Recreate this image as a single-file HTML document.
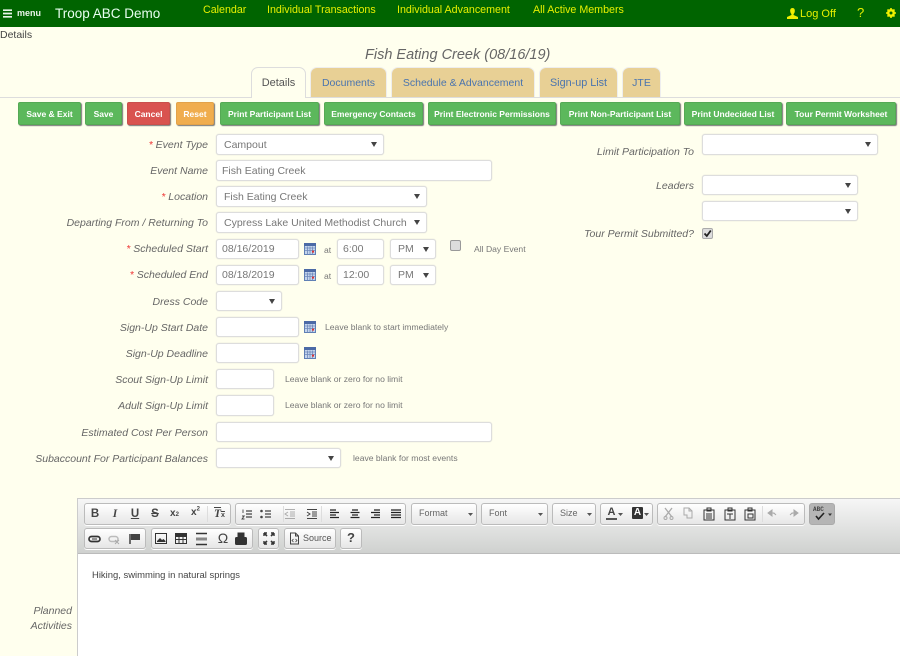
<!DOCTYPE html>
<html><head><meta charset="utf-8"><title>Details</title>
<style>
html,body{margin:0;padding:0}
body{width:900px;height:656px;overflow:hidden;background:#ffffee;position:relative;font-family:"Liberation Sans",sans-serif;color:#555}
#p *{position:absolute;box-sizing:border-box;white-space:nowrap}
svg *{position:static!important}
.nav{color:#e6f000;font-size:10.7px;top:3px;line-height:14px}
.tab{top:67px;height:30px;background:#e8d095;border:1px solid #eee;border-bottom:0;border-radius:7px 7px 0 0;color:#4a74ae;font-size:10.5px;line-height:31px;text-align:center}
.b{top:102px;height:23px;background:#5cb85c;color:#fff;font-weight:bold;font-size:8.5px;line-height:22px;text-align:center;border-radius:2px;box-shadow:1px 1px 1px #777;border:1px solid #55a955}
.l{right:692px;font-style:italic;font-size:10.5px;color:#666;line-height:14px;text-align:right;margin-top:1px}
.r{right:206px}
.l i{color:#e33;margin-right:3px;position:static!important;font-style:italic}
.f{background:#fff;border:1px solid #ddd;border-radius:3px;height:21px;font-size:10.5px;line-height:20px;color:#777;padding-left:5px;box-shadow:0 0 1px #ccc}
.s{padding-left:7px}
.s:after{content:"";position:absolute;right:6px;top:7px;border:3.5px solid transparent;border-top:5px solid #444;border-bottom:0}
.h{font-size:8.6px;color:#777;line-height:11px}
.cal{width:12px;height:12px}
.g{height:22px;background:linear-gradient(#fff,#e6e6e6);border:1px solid #bbb;border-radius:3px;box-shadow:0 1px 0 #fff}
.t{font-family:"Liberation Sans",sans-serif;color:#444;line-height:14px;text-align:center}
.d{font-size:9px;color:#666;line-height:20px;padding-left:8px}
.sep{width:1px;height:16px;background:#ddd;top:506px}
</style></head><body>
<svg width="0" height="0" style="position:absolute"><defs>
<g id="cal"><rect x=".5" y=".5" width="11" height="11" fill="#c4d4ec" stroke="#5f7fb5"/><rect x="0" y="0" width="12" height="3" fill="#4c6aa6"/><path d="M1 5h10M1 7.5h10M3.5 3.5v8M6 3.5v8M8.5 3.5v8" stroke="#6d88ba" stroke-width=".8"/><rect x="8" y="7.6" width="2" height="2" fill="#d33"/></g>
</defs></svg>
<div id="p">
<div style="left:0;top:0;width:900px;height:27px;background:#006400"></div>
<svg style="left:3px;top:9px" width="10" height="9"><path d="M0 1.2h9M0 4.500h9M0 7.800h9" stroke="#e8f4e8" stroke-width="1.700"/></svg>
<div style="left:17px;top:7px;color:#e8f4e8;font-size:9px;font-weight:bold;line-height:12px">menu</div>
<div style="left:55px;top:5px;color:#e8fff0;font-size:13.5px;line-height:17px">Troop ABC Demo</div>
<div class="nav" style="left:203px">Calendar</div>
<div class="nav" style="left:267px">Individual Transactions</div>
<div class="nav" style="left:397px">Individual Advancement</div>
<div class="nav" style="left:533px">All Active Members</div>
<svg style="left:787px;top:8px" width="11" height="11"><path d="M5.500 0C3.600 0 3 1.500 3.200 3.200c.1 1.200.6 2.200 1.200 2.800v1L0 9v2h11V9L6.600 7V6c.6-.6 1.100-1.600 1.200-2.800C8 1.500 7.400 0 5.500 0z" fill="#f0f000"/></svg>
<div class="nav" style="left:800px;top:7px;font-size:11px">Log Off</div>
<div class="nav" style="left:857px;top:6px;font-size:13px">?</div>
<svg style="left:886px;top:8px" width="10" height="10" viewBox="0 0 10 10"><circle cx="5" cy="5" r="2.900" fill="none" stroke="#f0f000" stroke-width="2.200"/><path d="M5 0v10M0 5h10M1.500 1.500l7 7M8.500 1.500l-7 7" stroke="#f0f000" stroke-width="1.600"/><circle cx="5" cy="5" r="1.500" fill="#006400"/></svg>

<div style="left:0;top:29px;font-size:10.5px;color:#444;line-height:13px">Details</div>
<div style="left:365px;top:46px;font-size:14.5px;font-style:italic;color:#666;line-height:19px">Fish Eating Creek (08/16/19)</div>

<div style="left:0;top:97px;width:900px;height:1px;background:#ddd"></div>
<div class="tab" style="left:251px;width:55px;height:31px;background:#ffffee;color:#555;border-color:#ddd;font-size:11px">Details</div>
<div class="tab" style="left:310px;width:77px">Documents</div>
<div class="tab" style="left:391px;width:144px">Schedule &amp; Advancement</div>
<div class="tab" style="left:539px;width:79px;font-size:10.8px">Sign-up List</div>
<div class="tab" style="left:622px;width:39px">JTE</div>

<div class="b" style="left:18px;width:63px">Save &amp; Exit</div>
<div class="b" style="left:85px;width:37px">Save</div>
<div class="b" style="left:127px;width:43px;background:#d9534f;border-color:#c9504c">Cancel</div>
<div class="b" style="left:176px;width:38px;background:#f0ad4e;border-color:#e2a24a">Reset</div>
<div class="b" style="left:220px;width:99px">Print Participant List</div>
<div class="b" style="left:324px;width:99px">Emergency Contacts</div>
<div class="b" style="left:428px;width:128px">Print Electronic Permissions</div>
<div class="b" style="left:560px;width:120px">Print Non-Participant List</div>
<div class="b" style="left:684px;width:98px">Print Undecided List</div>
<div class="b" style="left:786px;width:110px">Tour Permit Worksheet</div>

<div class="l" style="top:137px"><i>*</i>Event Type</div>
<div class="f s" style="left:216px;top:134px;width:168px">Campout</div>
<div class="l" style="top:163px">Event Name</div>
<div class="f" style="left:216px;top:160px;width:276px">Fish Eating Creek</div>
<div class="l" style="top:189px"><i>*</i>Location</div>
<div class="f s" style="left:216px;top:186px;width:211px">Fish Eating Creek</div>
<div class="l" style="top:215px">Departing From / Returning To</div>
<div class="f s" style="left:216px;top:212px;width:211px">Cypress Lake United Methodist Church</div>
<div class="l" style="top:241px"><i>*</i>Scheduled Start</div>
<div class="f" style="left:216px;top:239px;width:83px;height:20px;line-height:19px">08/16/2019</div>
<svg class="cal" style="left:304px;top:243px"><use href="#cal"/></svg>
<div class="h" style="left:324px;top:245px">at</div>
<div class="f" style="left:337px;top:239px;width:47px;height:20px;line-height:19px">6:00</div>
<div class="f s" style="left:390px;top:239px;width:46px;height:20px;line-height:19px">PM</div>
<div style="left:450px;top:240px;width:11px;height:11px;background:#ddd;border:1px solid #999;border-radius:2px"></div>
<div class="h" style="left:474px;top:244px">All Day Event</div>
<div class="l" style="top:267px"><i>*</i>Scheduled End</div>
<div class="f" style="left:216px;top:265px;width:83px;height:20px;line-height:19px">08/18/2019</div>
<svg class="cal" style="left:304px;top:269px"><use href="#cal"/></svg>
<div class="h" style="left:324px;top:271px">at</div>
<div class="f" style="left:337px;top:265px;width:47px;height:20px;line-height:19px">12:00</div>
<div class="f s" style="left:390px;top:265px;width:46px;height:20px;line-height:19px">PM</div>
<div class="l" style="top:294px">Dress Code</div>
<div class="f s" style="left:216px;top:291px;width:66px;height:20px"></div>
<div class="l" style="top:320px">Sign-Up Start Date</div>
<div class="f" style="left:216px;top:317px;width:83px;height:20px"></div>
<svg class="cal" style="left:304px;top:321px"><use href="#cal"/></svg>
<div class="h" style="left:325px;top:322px">Leave blank to start immediately</div>
<div class="l" style="top:346px">Sign-Up Deadline</div>
<div class="f" style="left:216px;top:343px;width:83px;height:20px"></div>
<svg class="cal" style="left:304px;top:347px"><use href="#cal"/></svg>
<div class="l" style="top:372px">Scout Sign-Up Limit</div>
<div class="f" style="left:216px;top:369px;width:58px;height:20px"></div>
<div class="h" style="left:285px;top:374px">Leave blank or zero for no limit</div>
<div class="l" style="top:398px">Adult Sign-Up Limit</div>
<div class="f" style="left:216px;top:395px;width:58px"></div>
<div class="h" style="left:285px;top:400px">Leave blank or zero for no limit</div>
<div class="l" style="top:425px">Estimated Cost Per Person</div>
<div class="f" style="left:216px;top:422px;width:276px;height:20px"></div>
<div class="l" style="top:451px">Subaccount For Participant Balances</div>
<div class="f s" style="left:216px;top:448px;width:125px;height:20px"></div>
<div class="h" style="left:353px;top:453px">leave blank for most events</div>

<div class="l r" style="top:144px">Limit Participation To</div>
<div class="f s" style="left:702px;top:134px;width:176px"></div>
<div class="l r" style="top:178px">Leaders</div>
<div class="f s" style="left:702px;top:175px;width:156px;height:20px"></div>
<div class="f s" style="left:702px;top:201px;width:156px;height:20px"></div>
<div class="l r" style="top:226px">Tour Permit Submitted?</div>
<div style="left:702px;top:228px;width:11px;height:11px;background:#ddd;border:1px solid #aaa;border-radius:2px"></div>
<svg style="left:702px;top:228px" width="11" height="11"><path d="M2.500 5.500l2.300 2.500 4-5.500" fill="none" stroke="#222" stroke-width="1.800"/></svg>

<div class="l" style="top:603px;right:828px">Planned</div>
<div class="l" style="top:618px;right:828px">Activities</div>

<div style="left:77px;top:498px;width:823px;height:158px;background:#fff;border-left:1px solid #ccc;border-top:1px solid #ccc"></div>
<div style="left:78px;top:499px;width:822px;height:55px;background:linear-gradient(#f6f6f6,#cfd1cf);border-bottom:1px solid #bbb"></div>

<div class="g" style="left:84px;top:503px;width:147px"></div>
<div class="g" style="left:235px;top:503px;width:171px"></div>
<div class="g" style="left:411px;top:503px;width:66px"></div>
<div class="g" style="left:481px;top:503px;width:67px"></div>
<div class="g" style="left:552px;top:503px;width:44px"></div>
<div class="g" style="left:600px;top:503px;width:53px"></div>
<div class="g" style="left:657px;top:503px;width:148px"></div>
<div style="left:809px;top:503px;width:26px;height:22px;background:#b5b5b5;border:1px solid #aaa;border-radius:3px"></div>
<div class="g" style="left:84px;top:528px;width:62px;height:21px"></div>
<div class="g" style="left:151px;top:528px;width:102px;height:21px"></div>
<div class="g" style="left:258px;top:528px;width:21px;height:21px"></div>
<div class="g" style="left:284px;top:528px;width:52px;height:21px"></div>
<div class="g" style="left:340px;top:528px;width:22px;height:21px"></div>

<div class="t" style="left:90px;top:507px;font-size:11.500px;font-weight:bold;width:10px">B</div>
<div class="t" style="left:110px;top:507px;font-size:11.500px;font-weight:bold;font-style:italic;font-family:'Liberation Serif',serif;width:10px">I</div>
<div class="t" style="left:130px;top:507px;font-size:11.500px;font-weight:bold;text-decoration:underline;width:10px">U</div>
<div class="t" style="left:150px;top:507px;font-size:11.500px;font-weight:bold;text-decoration:line-through;width:10px">S</div>
<div class="t" style="left:170px;top:507px;font-size:10px;font-weight:bold">x<span style="position:static;font-size:6px">2</span></div>
<div class="t" style="left:191px;top:506px;font-size:10px;font-weight:bold">x<sup style="position:static;font-size:6px;line-height:0">2</sup></div>
<div class="sep" style="left:207px"></div>
<div class="t" style="left:214px;top:507px;font-size:11.500px;font-weight:bold;font-style:italic;font-family:'Liberation Serif',serif;text-decoration:overline">T<span style="position:static;font-size:7px;font-style:normal;font-family:'Liberation Sans'">x</span></div>

<svg style="left:241px;top:508px" width="162" height="12" fill="none" stroke="#444"><path d="M5 3h6M5 6h6M5 9h6M24 3h6M24 6h6M24 9h6" stroke-width="1.200"/><path d="M2 1.500v3.500M1 8h2.200L1 11h2.500" stroke-width=".9"/><circle cx="20.500" cy="3" r="1.300" fill="#444" stroke="none"/><circle cx="20.500" cy="9" r="1.300" fill="#444" stroke="none"/><g opacity=".4"><path d="M44 1.500h10M44 10.500h10M49 4h5M49 6h5M49 8h5M47 4l-3 2 3 2" stroke-width="1"/></g><path d="M66 1.500h10M66 10.500h10M71 4h5M71 6h5M71 8h5M66 4l3 2-3 2" stroke-width="1"/><path d="M89 2h6M89 4.500h9M89 7h6M89 9.500h9M111 2h6M109.500 4.500h9M111 7h6M109.500 9.500h9M133 2h6M130 4.500h9M133 7h6M130 9.500h9M150 2h10M150 4.500h10M150 7h10M150 9.500h10" stroke="#222" stroke-width="1.300"/></svg>
<div class="sep" style="left:283px"></div><div class="sep" style="left:321px"></div><div class="sep" style="left:762px"></div>

<div class="t d" style="left:411px;top:503px;text-align:left">Format</div>
<svg style="left:468px;top:513px" width="6" height="4"><path d="M0 0h5L2.500 3z" fill="#555"/></svg>
<div class="t d" style="left:481px;top:503px;text-align:left">Font</div>
<svg style="left:538px;top:513px" width="6" height="4"><path d="M0 0h5L2.500 3z" fill="#555"/></svg>
<div class="t d" style="left:552px;top:503px;text-align:left">Size</div>
<svg style="left:587px;top:513px" width="6" height="4"><path d="M0 0h5L2.500 3z" fill="#555"/></svg>

<div class="t" style="left:606px;top:505px;font-size:11px;font-weight:bold;width:11px;border-bottom:2px solid #555;height:15px">A</div>
<svg style="left:618px;top:513px" width="6" height="4"><path d="M0 0h5L2.500 3z" fill="#555"/></svg>
<div class="t" style="left:632px;top:507px;width:11px;height:12px;background:#333;color:#fff;font-size:10px;font-weight:bold;line-height:12px;border-radius:1px">A</div>
<svg style="left:644px;top:513px" width="6" height="4"><path d="M0 0h5L2.500 3z" fill="#555"/></svg>

<svg style="left:663px;top:507px" width="140" height="14" fill="none" stroke="#444"><g stroke="#aaa"><path d="M2 1l7 9M9 1L2 10" stroke-width="1.300"/><circle cx="2.500" cy="11" r="1.500"/><circle cx="8.500" cy="11" r="1.500"/><path d="M21 1h5v3h3v7h-5V8h-3zM26 1l3 3" stroke-width="1"/></g><g stroke="#333"><path d="M41 3h10v10h-10zM44 1h4v3h-4zM43 7h6M43 9h6M43 11h6"/><path d="M62 3h10v10h-10zM65 1h4v3h-4zM64 7h6M67 7v5"/><path d="M82 3h10v10h-10zM85 1h4v3h-4zM85 7h5v4h-5z"/></g><path d="M105 6l4-3v6zM109 6h2l2 2M135 6l-4-3v6zM131 6h-2l-2 2" stroke="#aaa" fill="#aaa"/></svg>
<div class="t" style="left:813px;top:506px;font-size:6px;font-family:'Liberation Mono',monospace;font-weight:bold;line-height:8px">ABC</div>
<svg style="left:813px;top:511px" width="20" height="10" fill="none" stroke="#222"><path d="M3 5l2.500 3L11 2" stroke-width="1.600"/><path d="M15 2.500h4L17 5z" fill="#333" stroke="none"/></svg>

<svg style="left:88px;top:533px" width="60" height="12" fill="none"><rect x="1" y="3.500" width="11" height="5" rx="2.500" stroke="#333" stroke-width="1.700"/><path d="M4 6h5" stroke="#333"/><rect x="21" y="3.500" width="9" height="5" rx="2.500" stroke="#bbb" stroke-width="1.500"/><path d="M27 7l4 4M31 7l-4 4" stroke="#aaa"/><path d="M42 1v10" stroke="#333" stroke-width="1.400"/><path d="M43 1h9v6h-9z" fill="#444"/></svg>
<svg style="left:155px;top:532px" width="94" height="14" fill="none" stroke="#333"><rect x=".5" y="1.500" width="11" height="10"/><path d="M2 9l3-3 2 2 1.500-1 2 2v1H2z" fill="#333" stroke="none"/><rect x="20.500" y="1.500" width="11" height="10"/><path d="M20.500 1.500h11v3h-11z" fill="#333"/><path d="M20.500 7.500h11M24 4.500v7M28 4.500v7"/><path d="M41 1.500h11M41 12.500h11" stroke-width="1.500"/><path d="M41 7h11" stroke="#888" stroke-width="3"/><rect x="80.500" y="5.500" width="11" height="7" rx="1" fill="#333"/><rect x="83" y="1" width="6" height="5" fill="#333"/></svg>
<div class="t" style="left:217px;top:530px;font-size:14px;width:12px;line-height:17px">Ω</div>
<svg style="left:263px;top:532px" width="12" height="13" fill="none" stroke="#333" stroke-width="1.600"><path d="M1 1l3 3M11 1L8 4M1 12l3-3M11 12L8 9"/><path d="M1 1h3M1 1v3M11 1H8M11 1v3M1 12h3M1 12V9M11 12H8M11 12V9" stroke-width="1.400"/></svg>
<svg style="left:289px;top:532px" width="11" height="13" fill="none" stroke="#444"><path d="M1.500 1h5l3 3v8h-8zM6.500 1v3h3"/><path d="M4.500 7l-1.500 1.500L4.500 10M6.500 7L8 8.500 6.500 10" stroke-width=".8"/></svg>
<div class="t" style="left:303px;top:531px;font-size:9px;color:#555">Source</div>
<div class="t" style="left:346px;top:531px;font-size:13px;font-weight:bold;width:10px">?</div>

<div style="left:92px;top:570px;font-size:9.45px;color:#444;line-height:12px">Hiking, swimming in natural springs</div>
</div>
</body></html>
